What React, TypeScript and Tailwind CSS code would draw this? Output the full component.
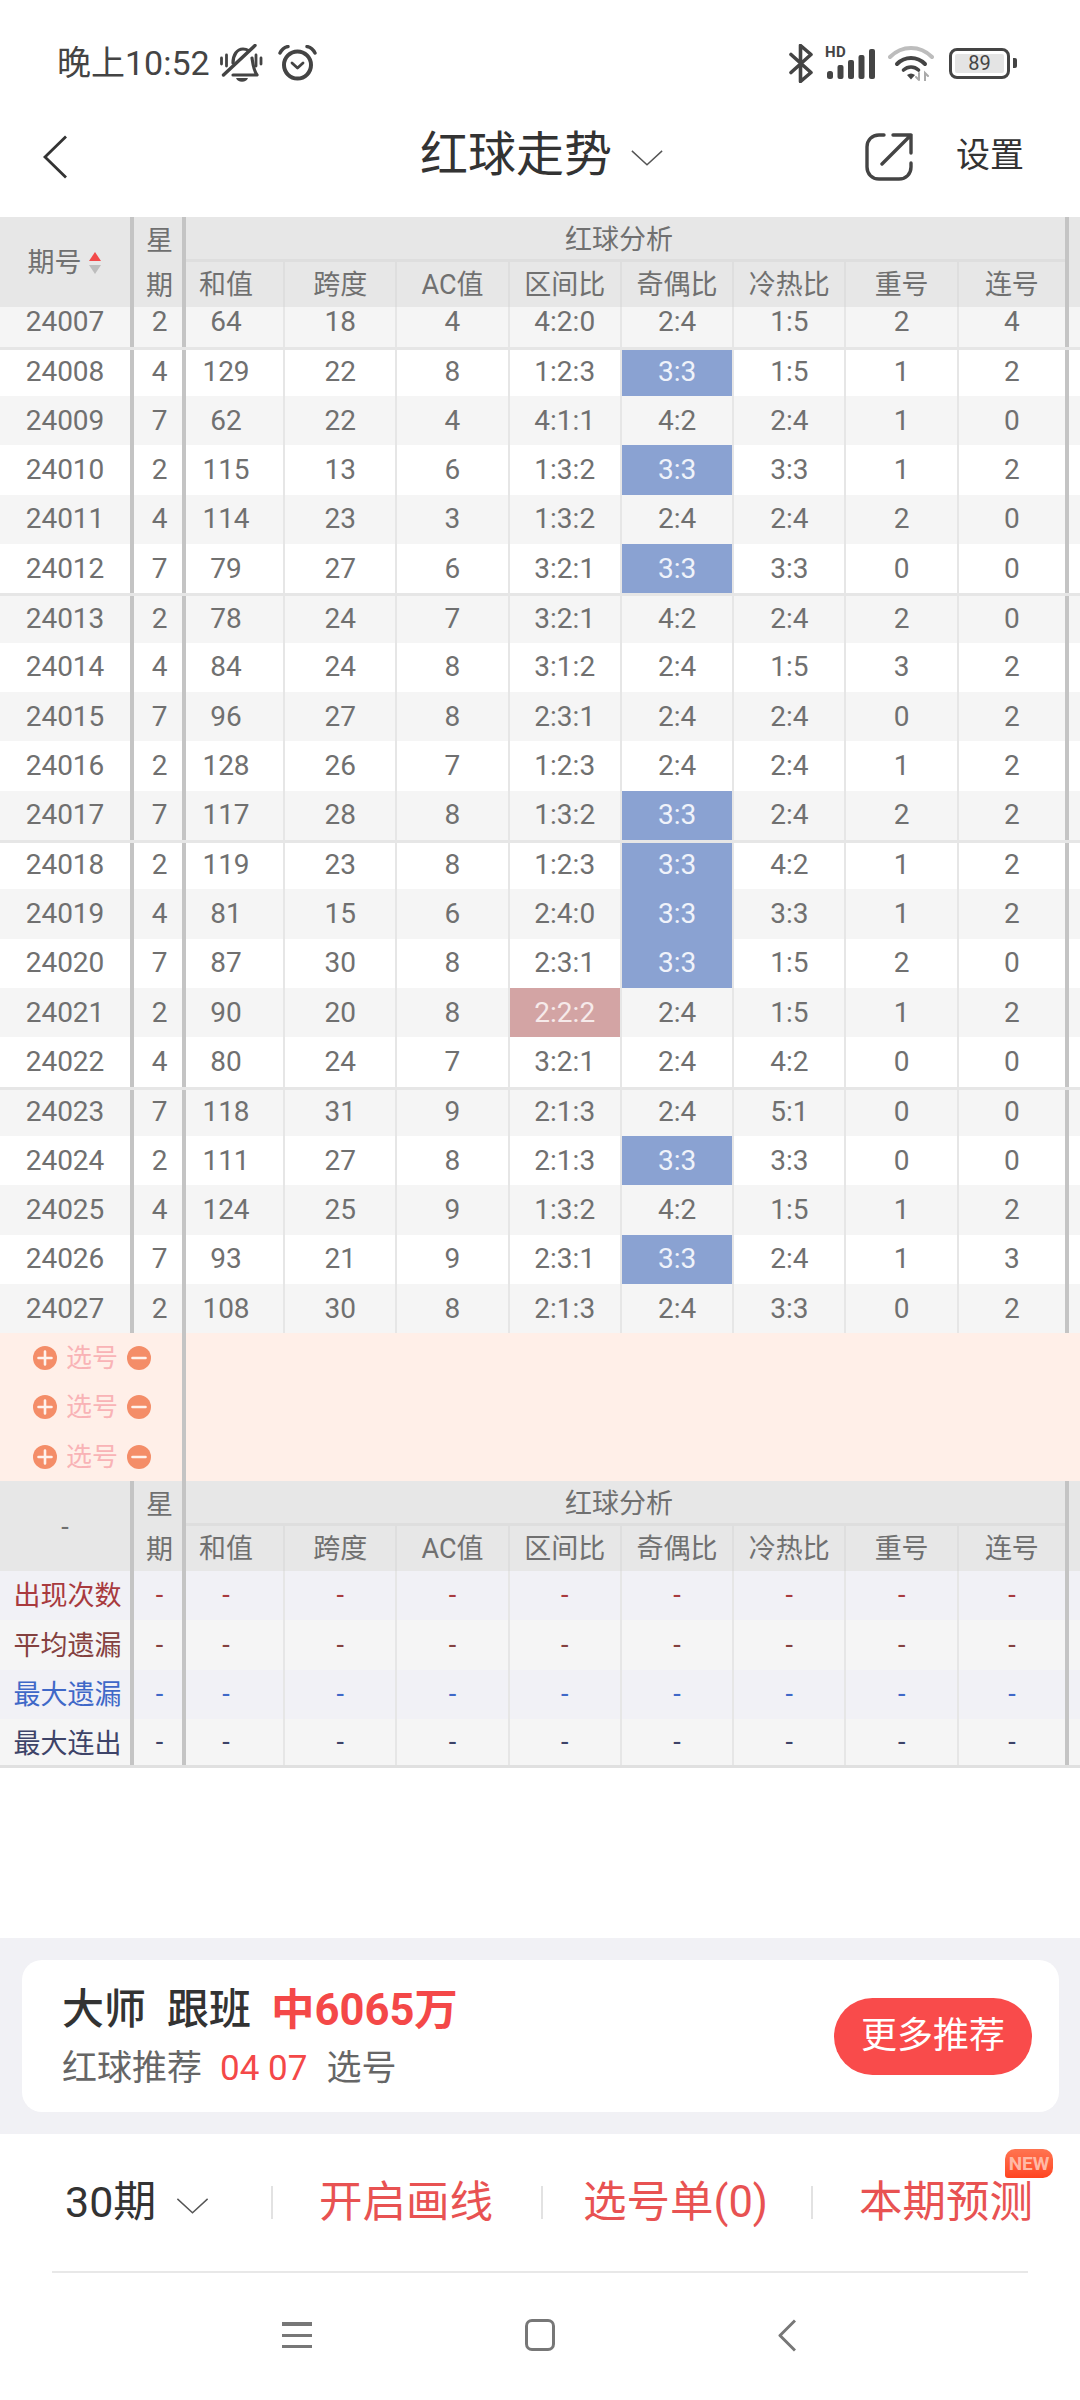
import React from "react";

type Row = [string, string, string, string, string, string, string, string, string, string];

const rows: Row[] = [
  ["24007", "2", "64", "18", "4", "4:2:0", "2:4", "1:5", "2", "4"],
  ["24008", "4", "129", "22", "8", "1:2:3", "3:3", "1:5", "1", "2"],
  ["24009", "7", "62", "22", "4", "4:1:1", "4:2", "2:4", "1", "0"],
  ["24010", "2", "115", "13", "6", "1:3:2", "3:3", "3:3", "1", "2"],
  ["24011", "4", "114", "23", "3", "1:3:2", "2:4", "2:4", "2", "0"],
  ["24012", "7", "79", "27", "6", "3:2:1", "3:3", "3:3", "0", "0"],
  ["24013", "2", "78", "24", "7", "3:2:1", "4:2", "2:4", "2", "0"],
  ["24014", "4", "84", "24", "8", "3:1:2", "2:4", "1:5", "3", "2"],
  ["24015", "7", "96", "27", "8", "2:3:1", "2:4", "2:4", "0", "2"],
  ["24016", "2", "128", "26", "7", "1:2:3", "2:4", "2:4", "1", "2"],
  ["24017", "7", "117", "28", "8", "1:3:2", "3:3", "2:4", "2", "2"],
  ["24018", "2", "119", "23", "8", "1:2:3", "3:3", "4:2", "1", "2"],
  ["24019", "4", "81", "15", "6", "2:4:0", "3:3", "3:3", "1", "2"],
  ["24020", "7", "87", "30", "8", "2:3:1", "3:3", "1:5", "2", "0"],
  ["24021", "2", "90", "20", "8", "2:2:2", "2:4", "1:5", "1", "2"],
  ["24022", "4", "80", "24", "7", "3:2:1", "2:4", "4:2", "0", "0"],
  ["24023", "7", "118", "31", "9", "2:1:3", "2:4", "5:1", "0", "0"],
  ["24024", "2", "111", "27", "8", "2:1:3", "3:3", "3:3", "0", "0"],
  ["24025", "4", "124", "25", "9", "1:3:2", "4:2", "1:5", "1", "2"],
  ["24026", "7", "93", "21", "9", "2:3:1", "3:3", "2:4", "1", "3"],
  ["24027", "2", "108", "30", "8", "2:1:3", "2:4", "3:3", "0", "2"],
];

const heads = ["和值", "跨度", "AC值", "区间比", "奇偶比", "冷热比", "重号", "连号"];

const colClasses = [
  "w-[99px] pr-[17px] border-r-2",
  "w-[112.3px] border-r-2",
  "w-[112.3px] border-r-2",
  "w-[112.3px] border-r-2",
  "w-[112.3px] border-r-2",
  "w-[112.3px] border-r-2",
  "w-[112.3px] border-r-2",
  "w-[110.2px] border-r-4",
];

const lineClasses = [
  "border-[#e6e6e6]",
  "border-[#e6e6e6]",
  "border-[#e6e6e6]",
  "border-[#e6e6e6]",
  "border-[#e6e6e6]",
  "border-[#e6e6e6]",
  "border-[#e6e6e6]",
  "border-[#c4c4c4]",
];

function TableHeader({ children }: { children: React.ReactNode }) {
  return (
    <div className="flex h-[90px] bg-[#e7e7e7] text-[27px] text-[#707070]">
      <div className="flex w-[134px] shrink-0 items-center justify-center border-r-4 border-[#c4c4c4] pt-[2px]">{children}</div>
      <div className="flex w-[52px] shrink-0 flex-col border-r-4 border-[#c4c4c4] pt-[2px] pl-[3px] text-center leading-[45px]">
        <span className="h-[45px] shrink-0">星</span>
        <span className="h-[43px] shrink-0">期</span>
      </div>
      <div className="flex w-[883px] shrink-0 flex-col border-r-4 border-[#c4c4c4]">
        <div className="flex h-[45px] items-center justify-center border-b-[3px] border-[#dedede] pt-[5px] pr-[13px]">红球分析</div>
        <div className="flex h-[45px]">
          {heads.map((h, i) => (
            <div key={h} className={`flex shrink-0 items-center justify-center pt-[2px] ${colClasses[i]} ${i === 7 ? "border-transparent" : "border-[#dedede]"}`}>
              {h}
            </div>
          ))}
        </div>
      </div>
    </div>
  );
}

function DataRow({ row, index }: { row: Row; index: number }) {
  const first = index === 0;
  const lined = index % 5 === 1;
  const bg = index % 2 === 0 ? "bg-[#f5f5f5]" : "bg-white";
  const values = row.slice(2);
  const shift = first ? "items-start leading-[30px]" : lined ? "items-center pb-[1.5px]" : "items-center";
  return (
    <div
      className={`flex text-[28px] leading-none text-[#707070] ${first ? "h-[39.67px]" : "h-[49.33px]"} ${bg} ${
        lined ? "border-t-[3px] border-[#e6e6e6]" : ""
      }`}
    >
      <div className={`flex w-[134px] shrink-0 justify-center border-r-4 border-[#c4c4c4] ${shift}`}>{row[0]}</div>
      <div className={`flex w-[52px] shrink-0 justify-center border-r-4 border-[#c4c4c4] pl-[3px] ${shift}`}>{row[1]}</div>
      {values.map((v, i) => {
        const blue = i === 4 && v === "3:3";
        const pink = i === 3 && v === "2:2:2";
        return (
          <div
            key={i}
            className={`flex shrink-0 justify-center ${shift} ${colClasses[i]} ${lineClasses[i]} ${
              blue ? "bg-[#8aa2d2] text-[#f0f3fa]" : pink ? "bg-[#d3a4a4] text-[#f6eaea]" : ""
            }`}
          >
            {v}
          </div>
        );
      })}
    </div>
  );
}

function PlusMinus({ minus }: { minus?: boolean }) {
  return (
    <svg width="24" height="24" viewBox="0 0 24 24" className="shrink-0">
      <circle cx="12" cy="12" r="12" fill="#f48d68" />
      <path d={minus ? "M5.5 12h13" : "M5.5 12h13M12 5.5v13"} stroke="#fff2ec" strokeWidth="2.6" strokeLinecap="round" />
    </svg>
  );
}

function PickRow() {
  return (
    <div className="flex h-[49.33px] w-[186px] items-center justify-center gap-[9px] border-r-4 border-[#c4c4c4] pl-[2px] text-[26px] leading-none text-[#f9b3b6]">
      <PlusMinus />
      <span className="whitespace-nowrap">选号</span>
      <PlusMinus minus />
    </div>
  );
}

const stats: [string, string, string][] = [
  ["出现次数", "text-[#a83a3e]", "bg-[#f1f1f6]"],
  ["平均遗漏", "text-[#84413f]", "bg-[#f5f5f5]"],
  ["最大遗漏", "text-[#3f68c8]", "bg-[#f1f1f6]"],
  ["最大连出", "text-[#3d4368]", "bg-[#f5f5f5]"],
];

function StatRow({ label, color, bg, last }: { label: string; color: string; bg: string; last: boolean }) {
  return (
    <div className={`flex h-[49.33px] text-[27px] ${color} ${bg} ${last ? "border-b-[3px] border-[#e0e0e0]" : ""}`}>
      <div className={`flex w-[134px] shrink-0 items-center justify-center border-r-4 border-[#c4c4c4] pl-[5px] ${last ? "pt-[5px]" : "pt-[2px]"}`}>{label}</div>
      <div className="flex w-[52px] shrink-0 items-center justify-center border-r-4 border-[#c4c4c4] pl-[3px]">-</div>
      {heads.map((h, i) => (
        <div key={h} className={`flex shrink-0 items-center justify-center ${colClasses[i]} ${lineClasses[i]}`}>
          -
        </div>
      ))}
    </div>
  );
}

function Chevron({ className }: { className: string }) {
  return (
    <svg viewBox="0 0 36 18" fill="none" className={className}>
      <path d="M1 1 L18 16.5 L35 1" stroke="#555" strokeWidth="1.6" />
    </svg>
  );
}

function StatusBar() {
  return (
    <div className="flex h-[93px] items-center pt-[33px] pl-[57px] pr-[63px] text-[#444]">
      <span className="text-[34px] leading-none whitespace-nowrap">晚上10:52</span>
      <svg width="43" height="38" viewBox="0 0 43 38" fill="none" className="ml-[10px] shrink-0" stroke="#444">
        <path d="M1.5 14v6M6.5 11v11M36 11v11M41 14v6" strokeWidth="2.8" strokeLinecap="round" />
        <path d="M3.5 31 L35 1.5" strokeWidth="3.4" strokeLinecap="round" />
        <path d="M13 19c0-8 4-14 10-14 2 0 4 .6 5.5 1.6M32 14c1 7 1.5 12 5 17H13" strokeWidth="3.2" strokeLinecap="round" strokeLinejoin="round" />
        <path d="M16 34h12c-1 2.6-3 3.8-6 3.8s-5-1.2-6-3.8z" fill="#444" stroke="none" />
      </svg>
      <svg width="39" height="36" viewBox="0 0 39 36" fill="none" className="ml-[15px] shrink-0" stroke="#444">
        <circle cx="19.5" cy="20" r="13.5" strokeWidth="4" />
        <path d="M2 8 C4 4 7 2 10 1.5M37 8 C35 4 32 2 29 1.5" strokeWidth="3.4" strokeLinecap="round" />
        <path d="M14 18l5.5 5 5.5-5" strokeWidth="2.8" strokeLinecap="round" strokeLinejoin="round" />
      </svg>
      <div className="ml-auto flex items-center">
        <svg width="24" height="39" viewBox="0 0 24 39" fill="none" stroke="#444" strokeWidth="3.6" strokeLinecap="round" strokeLinejoin="round">
          <path d="M2 10.5 L22 28.5 L11.5 37.5 V1.5 L22 10.5 L2 28.5" />
        </svg>
        <div className="relative ml-[12px] h-[32px] w-[50px]">
          <span className="absolute top-[-3px] left-0 text-[15px] leading-[16px] font-bold tracking-[0.5px] text-[#444]">HD</span>
          <svg width="50" height="32" viewBox="0 0 50 32" className="absolute inset-0">
            <rect x="2" y="24" width="6" height="8" rx="2.5" fill="#444" />
            <rect x="12.5" y="18" width="6" height="14" rx="2" fill="#444" />
            <rect x="23" y="13" width="6" height="19" rx="2" fill="#444" />
            <rect x="33.5" y="8" width="6" height="24" rx="2" fill="#444" />
            <rect x="44" y="2" width="6" height="30" rx="2" fill="#444" />
          </svg>
        </div>
        <svg width="46" height="36" viewBox="0 0 46 36" fill="none" className="ml-[13px]" strokeLinecap="round">
          <path d="M2 12 C14 0 32 0 44 12" stroke="#bdbdbd" strokeWidth="4" />
          <path d="M9 19 C17 11 29 11 37 19" stroke="#444" strokeWidth="4" />
          <path d="M15.5 25 C20 21 26 21 30.5 25" stroke="#444" strokeWidth="3.6" />
          <path d="M19 30 Q23 27 27 30 L23 34.5 Z" fill="#444" />
          <path d="M31 35l-3-3M31 35v-7M37 36v-8l3 3" stroke="#aaa" strokeWidth="2" />
        </svg>
        <div className="ml-[15px] flex h-[31px] w-[61px] items-center justify-center rounded-[8px] border-[3.5px] border-[#444] p-[3px]">
          <span className="flex h-full w-full items-center justify-center rounded-[2px] bg-[#e4e4e4] text-[20px] leading-none text-[#444]">89</span>
        </div>
        <div className="ml-[3px] h-[10px] w-[4px] rounded-r-[2px] bg-[#444]" />
      </div>
    </div>
  );
}

function NavBar() {
  return (
    <div className="flex h-[124px] items-center pl-[43px] pr-[56px]">
      <svg width="24" height="44" viewBox="0 0 24 44" fill="none" className="mt-[4px] shrink-0">
        <path d="M23 1.5 L2 22 L23 42.5" stroke="#333" strokeWidth="2.8" />
      </svg>
      <div className="ml-[353px] flex items-center">
        <span className="text-[48px] leading-none font-normal whitespace-nowrap text-[#333]">红球走势</span>
        <Chevron className="mt-[6px] ml-[18px] h-[16px] w-[34px]" />
      </div>
      <svg width="48" height="48" viewBox="0 0 48 48" fill="none" className="mt-[4px] ml-auto shrink-0" stroke="#444" strokeWidth="3.4" strokeLinecap="round" strokeLinejoin="round">
        <path d="M19 2H14C7 2 2 7 2 14V34C2 41 7 46 14 46H34C41 46 46 41 46 34V30" />
        <path d="M17 31 L46 2M28 2H46V20" />
      </svg>
      <span className="ml-[43px] text-[34px] leading-none whitespace-nowrap text-[#333]">设置</span>
    </div>
  );
}

function Promo() {
  return (
    <div className="mt-[170px] h-[196px] bg-[#f1f1f5] pt-[22px] pr-[21px] pl-[22px]">
      <div className="flex h-[152px] items-center justify-between rounded-[20px] bg-white pr-[27px] pl-[40px]">
        <div className="self-start pt-[26px]">
          <div className="flex h-[48px] items-center text-[42px] leading-none font-medium whitespace-nowrap text-[#333]">
            <span>大师</span>
            <span className="ml-[21px]">跟班</span>
            <span className="ml-[20px] text-[43.5px] font-bold text-[#f44848]">中6065万</span>
          </div>
          <div className="mt-[12px] flex h-[44px] items-center text-[35px] leading-none whitespace-nowrap text-[#666]">
            <span>红球推荐</span>
            <span className="ml-[18px] text-[#f44848]">04 07</span>
            <span className="ml-[19px]">选号</span>
          </div>
        </div>
        <div className="flex h-[77px] w-[198px] items-center justify-center rounded-full bg-[#f94b4b] text-[36px] leading-none text-white">更多推荐</div>
      </div>
    </div>
  );
}

function BottomBar() {
  return (
    <div className="flex h-[137px] items-center pl-[65px] text-[43.5px] leading-none whitespace-nowrap text-[#e85252]">
      <span className="w-[90px] shrink-0 text-[43px] text-[#333]">30期</span>
      <Chevron className="mt-[6px] ml-[20px] h-[16px] w-[35px]" />
      <div className="ml-[61px] h-[33px] w-[2px] bg-[#e2e2e2]" />
      <span className="ml-[46px] w-[176px] shrink-0">开启画线</span>
      <div className="ml-[46px] h-[33px] w-[2px] bg-[#e2e2e2]" />
      <span className="ml-[40px] w-[187px] shrink-0">选号单(0)</span>
      <div className="ml-[41px] h-[33px] w-[2px] bg-[#e2e2e2]" />
      <span className="relative ml-[46px] w-[175px] shrink-0">
        本期预测
        <span className="absolute -top-[32px] left-[146px] flex h-[29px] w-[48px] items-center justify-center rounded-t-[10px] rounded-br-[10px] rounded-bl-[3px] bg-linear-to-b from-[#ff7450] to-[#ff431f] text-[19px] leading-none font-bold text-[#ffb9a5]">
          NEW
        </span>
      </span>
    </div>
  );
}

function SystemNav() {
  return (
    <div className="flex h-[127px] items-center pb-[3px] pl-[282px]">
      <div className="flex h-[26px] w-[30px] flex-col justify-between">
        <div className="h-[3.5px] bg-[#777]" />
        <div className="h-[3.5px] bg-[#777]" />
        <div className="h-[3.5px] bg-[#777]" />
      </div>
      <div className="ml-[213px] h-[32px] w-[30px] rounded-[7px] border-[3.5px] border-[#777]" />
      <svg width="18" height="33" viewBox="0 0 18 33" fill="none" className="ml-[223px]">
        <path d="M17 1.5 L2 16.5 L17 31.5" stroke="#777" strokeWidth="3" strokeLinejoin="round" />
      </svg>
    </div>
  );
}

export default function App() {
  return (
    <div className="h-[2400px] w-[1080px] overflow-hidden bg-white font-[Roboto,'Noto_Sans_CJK_SC',sans-serif]">
      <StatusBar />
      <NavBar />
      <TableHeader>
        <span className="flex items-center gap-[7px] pr-[2px]">
          <span>期号</span>
          <span className="flex flex-col gap-[4px]">
            <span className="h-0 w-0 border-x-[6px] border-b-[9px] border-x-transparent border-b-[#f24a4a]" />
            <span className="h-0 w-0 border-x-[6px] border-t-[9px] border-x-transparent border-t-[#bdbdbd]" />
          </span>
        </span>
      </TableHeader>
      <div className="h-[1026.33px] overflow-hidden">
        {rows.map((r, i) => (
          <DataRow key={r[0]} row={r} index={i} />
        ))}
      </div>
      <div className="h-[147.67px] bg-[#ffefe8]">
        <PickRow />
        <PickRow />
        <PickRow />
      </div>
      <TableHeader>-</TableHeader>
      {stats.map((s, i) => (
        <StatRow key={s[0]} label={s[0]} color={s[1]} bg={s[2]} last={i === 3} />
      ))}
      <Promo />
      <BottomBar />
      <div className="mx-[52px] h-[2px] bg-[#e8e8e8]" />
      <SystemNav />
    </div>
  );
}
